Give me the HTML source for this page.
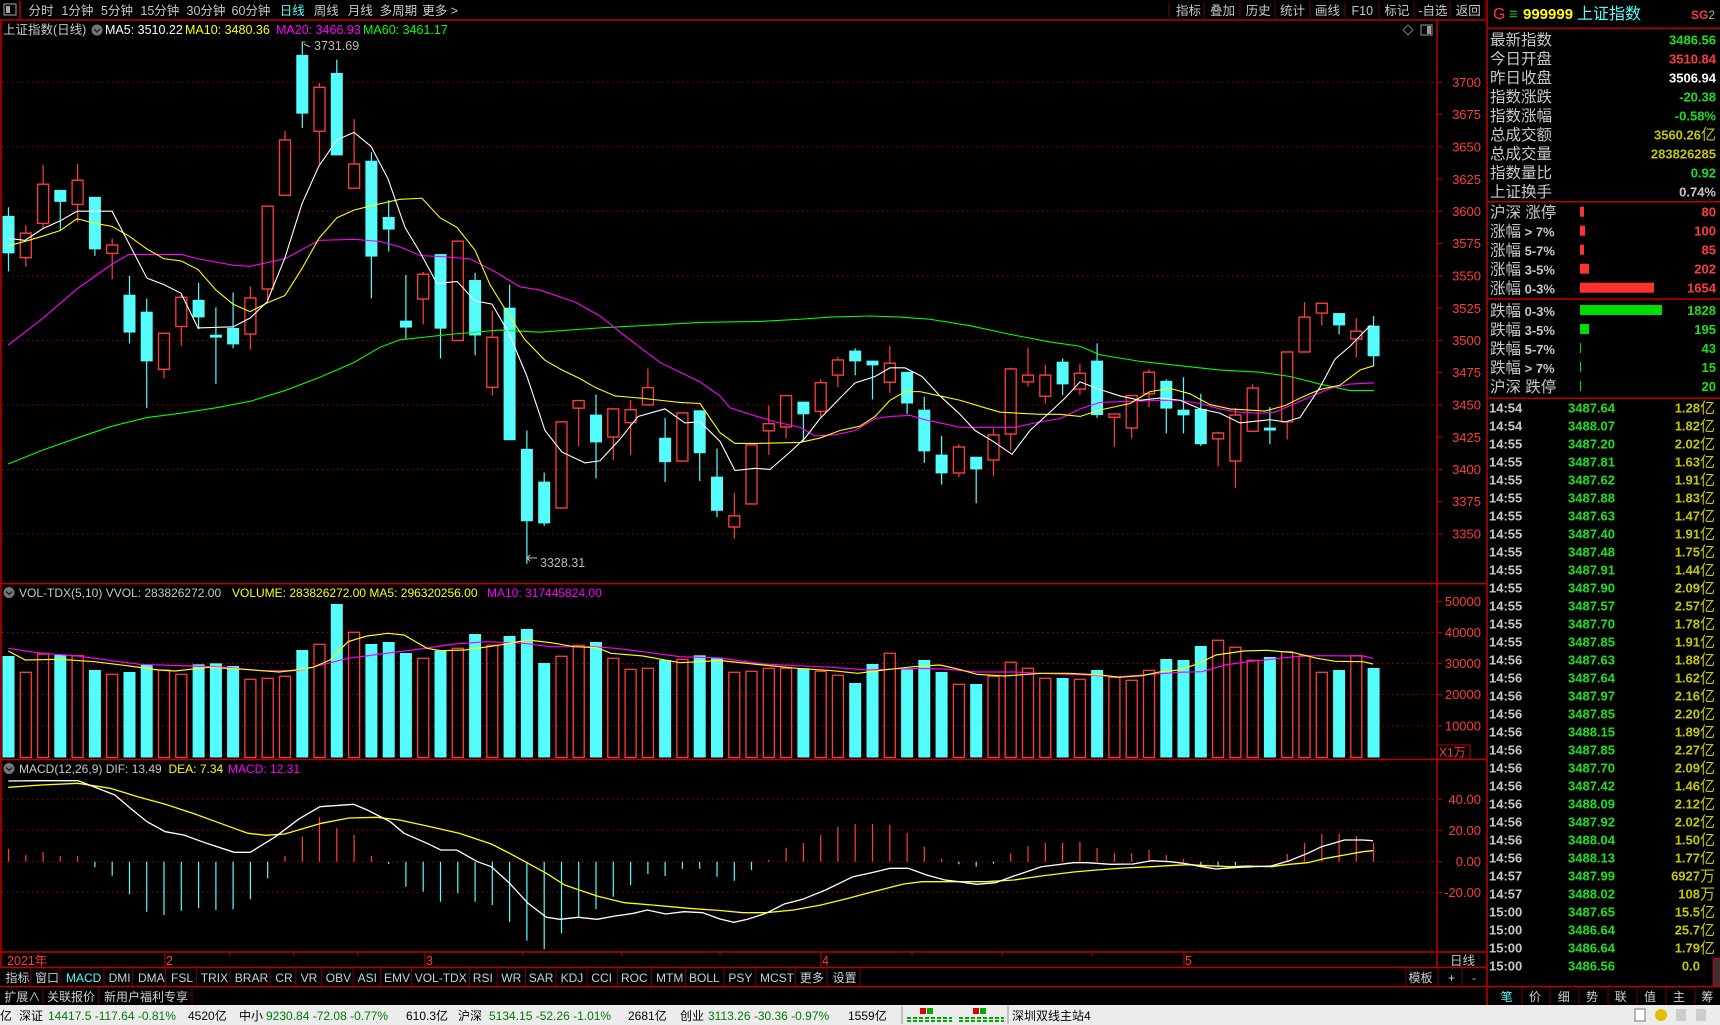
<!DOCTYPE html>
<html><head><meta charset="utf-8"><style>
html,body{margin:0;padding:0;background:#000;width:1720px;height:1025px;overflow:hidden}
svg{display:block}
text{font-family:"Liberation Sans","Noto Sans CJK SC",sans-serif}
.c{fill:#54fcfc}.cl{stroke:#54fcfc;stroke-width:1.2;fill:none}
.r{fill:none;stroke:#ff3c3c;stroke-width:1.3}.rl{stroke:#ff3c3c;stroke-width:1.2;fill:none}
.g{stroke:#a00000;stroke-dasharray:1.5 3.5;stroke-width:1}
.b{stroke:#c00000;stroke-width:1.5;fill:none}
.ax{fill:#ff3c3c;font-size:13px;text-anchor:end}
.tb{fill:#c8c8c8;font-size:12.5px}
.tab{fill:#d0d0d0;font-size:12px}
.lb{fill:#c8c8c8;font-size:15.5px}
.v{font-size:13px;font-weight:bold;text-anchor:end}
.t{font-size:13px;font-weight:bold}
.sep{stroke:#7a0000;stroke-width:1}
</style></head><body>
<svg width="1720" height="1025" viewBox="0 0 1720 1025" xmlns="http://www.w3.org/2000/svg">
<rect width="1720" height="1025" fill="#000"/>
<!-- toolbar -->
<rect x="4" y="4" width="12" height="11" fill="none" stroke="#aaa"/><rect x="6" y="6" width="4" height="7" fill="#aaa"/>
<line x1="20" y1="1" x2="20" y2="19" class="b"/>
<g class="tb">
<text x="28.5" y="15">分时</text><text x="61.4" y="15">1分钟</text><text x="101" y="15">5分钟</text><text x="140.4" y="15">15分钟</text><text x="186.5" y="15">30分钟</text><text x="231.5" y="15">60分钟</text><text x="279.7" y="15" fill="#54fcfc">日线</text><text x="313.7" y="15">周线</text><text x="347.7" y="15">月线</text><text x="379.6" y="15">多周期</text><text x="422.3" y="15">更多 &gt;</text>
<text x="1176" y="15">指标</text><text x="1210" y="15">叠加</text><text x="1245.6" y="15">历史</text><text x="1280" y="15">统计</text><text x="1315" y="15">画线</text><text x="1351.5" y="15">F10</text><text x="1384.4" y="15">标记</text><text x="1418.4" y="15">-自选</text><text x="1455.7" y="15">返回</text>
</g>
<g class="sep"><line x1="1169" y1="2" x2="1169" y2="18"/><line x1="1204" y1="2" x2="1204" y2="18"/><line x1="1240" y1="2" x2="1240" y2="18"/><line x1="1275" y1="2" x2="1275" y2="18"/><line x1="1310" y1="2" x2="1310" y2="18"/><line x1="1345" y1="2" x2="1345" y2="18"/><line x1="1379" y1="2" x2="1379" y2="18"/><line x1="1414" y1="2" x2="1414" y2="18"/><line x1="1450" y1="2" x2="1450" y2="18"/><line x1="1485" y1="2" x2="1485" y2="18"/></g>
<line x1="0" y1="20" x2="1487" y2="20" class="b"/>
<!-- frame lines -->
<line x1="1" y1="20" x2="1" y2="968" class="b"/>
<line x1="1437" y1="20" x2="1437" y2="968" class="b"/>
<line x1="1487" y1="0" x2="1487" y2="1005" class="b"/>
<line x1="0" y1="583.6" x2="1487" y2="583.6" class="b"/>
<line x1="0" y1="759.5" x2="1487" y2="759.5" class="b"/>
<line x1="0" y1="952" x2="1487" y2="952" class="b"/>
<line x1="0" y1="967.5" x2="1487" y2="967.5" class="b"/>
<line x1="0" y1="986.5" x2="1720" y2="986.5" class="b"/>
<!-- main header -->
<text x="3" y="34" fill="#c8c8c8" font-size="12.5">上证指数(日线)</text>
<circle cx="97" cy="30" r="5.5" fill="#777"/><path d="M94 29l3 3 3-3" stroke="#222" stroke-width="1.5" fill="none"/>
<text y="34" font-size="12.5"><tspan x="105" fill="#fff">MA5: 3510.22</tspan><tspan x="185" fill="#ffff00">MA10: 3480.36</tspan><tspan x="276" fill="#ff00ff">MA20: 3466.93</tspan><tspan x="363" fill="#00ff00">MA60: 3461.17</tspan></text>
<path d="M1408 25l5 5-5 5-5-5z" fill="none" stroke="#777"/>
<rect x="1421" y="25" width="11" height="10" fill="none" stroke="#999"/><rect x="1427" y="26" width="4" height="8" fill="#999"/>
<!-- main grid -->
<g class="g"><line x1="2" y1="82.3" x2="1437" y2="82.3"/><line x1="2" y1="146.8" x2="1437" y2="146.8"/><line x1="2" y1="211.3" x2="1437" y2="211.3"/><line x1="2" y1="275.9" x2="1437" y2="275.9"/><line x1="2" y1="340.4" x2="1437" y2="340.4"/><line x1="2" y1="404.9" x2="1437" y2="404.9"/><line x1="2" y1="469.4" x2="1437" y2="469.4"/><line x1="2" y1="533.9" x2="1437" y2="533.9"/></g>
<g class="ax">
<text x="1481" y="87">3700</text><text x="1481" y="119">3675</text><text x="1481" y="151.5">3650</text><text x="1481" y="184">3625</text><text x="1481" y="216">3600</text><text x="1481" y="248">3575</text><text x="1481" y="280.5">3550</text><text x="1481" y="313">3525</text><text x="1481" y="345">3500</text><text x="1481" y="377">3475</text><text x="1481" y="409.5">3450</text><text x="1481" y="442">3425</text><text x="1481" y="474">3400</text><text x="1481" y="506">3375</text><text x="1481" y="538.5">3350</text>
</g>
<g stroke="#c00000"><line x1="1437" y1="82.3" x2="1442" y2="82.3"/><line x1="1437" y1="114.6" x2="1442" y2="114.6"/><line x1="1437" y1="146.8" x2="1442" y2="146.8"/><line x1="1437" y1="179.1" x2="1442" y2="179.1"/><line x1="1437" y1="211.3" x2="1442" y2="211.3"/><line x1="1437" y1="243.6" x2="1442" y2="243.6"/><line x1="1437" y1="275.9" x2="1442" y2="275.9"/><line x1="1437" y1="308.1" x2="1442" y2="308.1"/><line x1="1437" y1="340.4" x2="1442" y2="340.4"/><line x1="1437" y1="372.6" x2="1442" y2="372.6"/><line x1="1437" y1="404.9" x2="1442" y2="404.9"/><line x1="1437" y1="437.1" x2="1442" y2="437.1"/><line x1="1437" y1="469.4" x2="1442" y2="469.4"/><line x1="1437" y1="501.7" x2="1442" y2="501.7"/><line x1="1437" y1="533.9" x2="1442" y2="533.9"/></g>
<!-- candles -->
<g transform="matrix(1,0,0,1.0803,0,-1.606)">
<path class="cl" d="M8.5 193.3V252.7M60.3 177.3V214.3M94.9 183.7V238.3M129.5 256.7V319.3M146.7 278V379.3M198.6 263.3V306M215.9 286V356.7M233.1 272.3V324M302.3 40V120M336.8 56.7V145.3M371.4 142.3V277.7M388.7 186.7V234.3M405.9 256V315M440.5 236.7V333.3M475.1 254V330.3M509.6 265V409M526.9 400V523.3M544.2 439V488.3M596 366.7V444.3M665.1 388.3V447.7M699.7 381.3V446.7M717 416.7V480M803.4 373.3V410M855.2 324V349M872.5 335.3V371.3M907.1 345.7V385M924.3 368.7V430M941.6 405V450M976.2 424.3V467.3M1062.6 333.3V367.3M1097.1 319.3V388.3M1166.3 352.7V402.7M1183.5 350.7V402.7M1200.8 366V414.3M1269.9 378.3V412.7M1339.1 291.3V311M1373.6 294V340"/>
<path class="rl" d="M25.8 210V217.3M25.8 240V248.3M43.1 154V172M43.1 208.3V212.7M77.6 153.3V168.3M77.6 190.7V207.3M112.2 222.3V228.3M112.2 236V260M164 343.3V351.7M181.3 274.3V276.7M181.3 303.7V321.7M250.4 266.7V277.3M250.4 310.7V325M267.7 269V280M285 122.7V131M319.5 78.3V82.3M319.5 123V153.3M354.1 111.7V153.3M423.2 253.3V255.3M423.2 278.3V301.7M492.3 289.3V313.7M492.3 360V367.3M578.7 379.3V414.3M613.3 406V427.3M630.6 371.7V380.7M630.6 392.7V422.7M647.9 342.7V360.3M734.3 457.7V479M734.3 489.3V500M768.8 376.7V393.7M768.8 400.3V422.7M786.1 396.7V407M820.7 352.7V355.7M820.7 382.3V388.3M837.9 331.7V334.7M837.9 348.7V360M889.8 321.7V337.7M889.8 355.3V365M958.9 412.7V415.3M958.9 439.3V443.3M993.5 398.3V404M993.5 427.3V442.3M1010.7 341.7V343M1010.7 403.3V418.3M1028 323.3V348.7M1028 355V359.3M1045.3 339V348.7M1045.3 368.3V375M1079.9 338.3V347M1079.9 361.7V367.3M1114.4 387.7V415M1131.7 397.7V407.3M1149 343.3V346M1149 366V378.3M1218.1 401V402.3M1218.1 407.7V433.3M1235.4 379.3V385.7M1235.4 428.3V453.3M1252.7 357.3V360.7M1287.2 392V408.3M1304.5 281V295M1321.8 291.3V302.7M1356.3 296V308M1356.3 315.3V332"/>
<g class="c">
<rect x="2.5" y="201.3" width="12" height="34.7"/><rect x="54.3" y="177.3" width="12" height="11"/><rect x="88.9" y="183.7" width="12" height="48.6"/><rect x="123.5" y="274.3" width="12" height="35"/><rect x="140.7" y="290" width="12" height="46"/><rect x="192.6" y="279" width="12" height="16.3"/><rect x="209.9" y="311.3" width="12" height="2.7"/><rect x="227.1" y="305" width="12" height="15.3"/><rect x="296.3" y="52.3" width="12" height="54.4"/><rect x="330.8" y="69" width="12" height="76.3"/><rect x="365.4" y="150.3" width="12" height="88.7"/><rect x="382.7" y="202.3" width="12" height="11.7"/><rect x="399.9" y="298.3" width="12" height="6.4"/><rect x="434.5" y="236.7" width="12" height="69"/><rect x="469.1" y="260.7" width="12" height="51.3"/><rect x="503.6" y="286.3" width="12" height="122.7"/><rect x="520.9" y="417" width="12" height="67"/><rect x="538.2" y="447.3" width="12" height="38.7"/><rect x="590" y="385.3" width="12" height="25.7"/><rect x="659.1" y="406.7" width="12" height="22.6"/><rect x="693.7" y="381.3" width="12" height="39.7"/><rect x="711" y="442.7" width="12" height="31.6"/><rect x="797.4" y="373.3" width="12" height="11.7"/><rect x="849.2" y="326" width="12" height="10"/><rect x="866.5" y="335.3" width="12" height="4.4"/><rect x="901.1" y="345.7" width="12" height="29.3"/><rect x="918.3" y="380.7" width="12" height="38.6"/><rect x="935.6" y="422.3" width="12" height="17.4"/><rect x="970.2" y="424.3" width="12" height="11.7"/><rect x="1056.6" y="336.3" width="12" height="21"/><rect x="1091.1" y="335.3" width="12" height="50.4"/><rect x="1160.3" y="354" width="12" height="25.7"/><rect x="1177.5" y="380.7" width="12" height="5.3"/><rect x="1194.8" y="380" width="12" height="32.7"/><rect x="1263.9" y="397.3" width="12" height="2.7"/><rect x="1333.1" y="291.3" width="12" height="11.4"/><rect x="1367.6" y="303" width="12" height="28.3"/>
</g>
<g class="r">
<rect x="20.3" y="217.3" width="11" height="22.7"/><rect x="37.6" y="172" width="11" height="36.3"/><rect x="72.1" y="168.3" width="11" height="22.4"/><rect x="106.7" y="228.3" width="11" height="7.7"/><rect x="158.5" y="310" width="11" height="33.3"/><rect x="175.8" y="276.7" width="11" height="27"/><rect x="244.9" y="277.3" width="11" height="33.4"/><rect x="262.2" y="192.3" width="11" height="76.7"/><rect x="279.5" y="131" width="11" height="51.3"/><rect x="314" y="82.3" width="11" height="40.7"/><rect x="348.6" y="153.3" width="11" height="22.4"/><rect x="417.7" y="255.3" width="11" height="23"/><rect x="452.3" y="224.7" width="11" height="92"/><rect x="486.8" y="313.7" width="11" height="46.3"/><rect x="556" y="392" width="11" height="79.7"/><rect x="573.2" y="372.3" width="11" height="7"/><rect x="607.8" y="380" width="11" height="26"/><rect x="625.1" y="380.7" width="11" height="12"/><rect x="642.4" y="360.3" width="11" height="16"/><rect x="676.9" y="383.7" width="11" height="44.6"/><rect x="728.8" y="479" width="11" height="10.3"/><rect x="746" y="413.3" width="11" height="54.7"/><rect x="763.3" y="393.7" width="11" height="6.6"/><rect x="780.6" y="367.7" width="11" height="29"/><rect x="815.2" y="355.7" width="11" height="26.6"/><rect x="832.4" y="334.7" width="11" height="14"/><rect x="884.3" y="337.7" width="11" height="17.6"/><rect x="953.4" y="415.3" width="11" height="24"/><rect x="988" y="404" width="11" height="23.3"/><rect x="1005.2" y="343" width="11" height="60.3"/><rect x="1022.5" y="348.7" width="11" height="6.3"/><rect x="1039.8" y="348.7" width="11" height="19.6"/><rect x="1074.4" y="347" width="11" height="14.7"/><rect x="1108.9" y="384.7" width="11" height="3"/><rect x="1126.2" y="367.7" width="11" height="30"/><rect x="1143.5" y="346" width="11" height="20"/><rect x="1212.6" y="402.3" width="11" height="5.4"/><rect x="1229.9" y="385.7" width="11" height="42.6"/><rect x="1247.2" y="360.7" width="11" height="40"/><rect x="1281.7" y="327.3" width="11" height="64.7"/><rect x="1299" y="295" width="11" height="32.3"/><rect x="1316.3" y="282.3" width="11" height="9"/><rect x="1350.8" y="308" width="11" height="7.3"/>
</g>
<g fill="none" stroke-width="1.1" vector-effect="non-scaling-stroke">
<polyline stroke="#00ff00" vector-effect="non-scaling-stroke" points="8,431 43,418 77,407 112,396 147,388 181,384 216,379 250,373 285,363 319,351 354,337 380,323 400,316 450,311 500,307 540,309 600,305 660,302 700,300 760,299 800,297 830,295 870,294 900,295 930,297 970,303 1010,311 1050,318 1080,322 1100,330 1140,336 1180,340 1220,344 1260,346 1290,350 1320,357 1350,363 1374,363"/>
<polyline stroke="#ff00ff" vector-effect="non-scaling-stroke" points="8,321 43,296 77,269 112,246 129,237 147,237 181,237 198,241 233,247 250,248 285,241 319,224 354,223 380,225 400,230 420,238 440,239 470,241 495,253 520,267 540,270 575,281 600,294 630,316 660,337 700,355 720,368 730,379 750,385 775,392 800,397 815,405 835,404 855,400 875,389 890,387 910,386 925,390 940,393 960,397 985,397 1015,397 1040,392 1060,389 1080,380 1100,374 1130,373 1160,372 1180,372 1200,375 1220,380 1240,383 1260,384 1275,383 1290,377 1310,369 1330,361 1350,357 1374,356"/>
<polyline stroke="#ffff00" vector-effect="non-scaling-stroke" points="8,229 25,225 43,220 60,215 77,204 94,208 112,211 129,220 147,232 164,241 181,243 198,251 216,270 233,283 250,290 267,282 285,275 302,250 319,222 337,203 354,196 371,192 400,186 422,185 440,203 457,212 475,233 490,265 510,295 525,316 545,335 562,344 580,352 595,360 615,368 640,370 660,372 680,374 700,375 720,402 735,412 755,412 800,411 820,407 840,400 860,396 875,387 890,372 905,364 920,364 940,368 960,372 985,379 1000,383 1040,385 1060,385 1080,387 1100,381 1130,375 1150,364 1170,361 1190,366 1210,376 1230,380 1265,382 1285,377 1300,370 1320,362 1340,358 1360,344 1374,340"/>
<polyline stroke="#ffffff" vector-effect="non-scaling-stroke" points="8,222 25,224 43,213 60,206 77,197 112,197 129,227 147,259 164,265 181,273 198,305 233,304 250,296 267,281 285,240 302,190 319,155 337,131 354,124 371,137 388,167 405,212 420,235 437,264 457,262 475,280 492,283 509,310 527,350 545,400 562,420 585,430 600,428 620,408 638,387 665,380 685,393 700,392 720,410 735,437 755,435 770,436 790,420 805,407 820,389 840,370 855,356 875,350 890,342 905,342 922,350 940,368 960,385 975,400 993,410 1012,422 1030,400 1050,383 1065,370 1080,355 1100,362 1120,368 1140,372 1160,370 1180,372 1200,380 1220,384 1240,393 1270,390 1285,392 1300,388 1320,360 1335,334 1350,322 1370,303 1374,304"/>
</g>
</g>
<!-- hi/lo labels -->
<path d="M302.3 42V47M302.3 42h3M304 44l6 3" stroke="#bbb" fill="none"/>
<text x="314" y="50" fill="#bbb" font-size="12.5">3731.69</text>
<path d="M527 558h10M527 558l3-3M527 558l3 3" stroke="#bbb" fill="none"/>
<text x="540" y="567" fill="#bbb" font-size="12.5">3328.31</text>
<!-- volume panel -->
<circle cx="9" cy="592.5" r="5.5" fill="#777"/><path d="M6 591.5l3 3 3-3" stroke="#222" stroke-width="1.5" fill="none"/>
<text y="597" font-size="12"><tspan x="19" fill="#c8c8c8">VOL-TDX(5,10) VVOL: 283826272.00</tspan><tspan x="232" fill="#ffff00">VOLUME: 283826272.00  MA5: 296320256.00</tspan><tspan x="487" fill="#ff00ff">MA10: 317445824.00</tspan></text>
<g class="g"><line x1="2" y1="632.5" x2="1437" y2="632.5"/><line x1="2" y1="663.5" x2="1437" y2="663.5"/><line x1="2" y1="694.5" x2="1437" y2="694.5"/><line x1="2" y1="726" x2="1437" y2="726"/></g>
<g class="ax"><text x="1481" y="606">50000</text><text x="1481" y="637">40000</text><text x="1481" y="668">30000</text><text x="1481" y="699">20000</text><text x="1481" y="730.5">10000</text></g>
<g stroke="#c00000"><line x1="1437" y1="601.6" x2="1442" y2="601.6"/><line x1="1437" y1="632.5" x2="1442" y2="632.5"/><line x1="1437" y1="663.5" x2="1442" y2="663.5"/><line x1="1437" y1="694.5" x2="1442" y2="694.5"/><line x1="1437" y1="726" x2="1442" y2="726"/></g>
<rect x="1437" y="745" width="33" height="14" fill="none" stroke="#c00000"/><text x="1439" y="756.5" fill="#ff3c3c" font-size="12">X1万</text>
<g class="c">
<rect x="2.5" y="656" width="12" height="101.5"/><rect x="54.3" y="655" width="12" height="102.5"/><rect x="88.9" y="670" width="12" height="87.5"/><rect x="123.5" y="672" width="12" height="85.5"/><rect x="140.7" y="665" width="12" height="92.5"/><rect x="192.6" y="664.3" width="12" height="93.2"/><rect x="209.9" y="663.3" width="12" height="94.2"/><rect x="227.1" y="666" width="12" height="91.5"/><rect x="296.3" y="650" width="12" height="107.5"/><rect x="330.8" y="604" width="12" height="153.5"/><rect x="365.4" y="644" width="12" height="113.5"/><rect x="382.7" y="642" width="12" height="115.5"/><rect x="399.9" y="653" width="12" height="104.5"/><rect x="434.5" y="650.7" width="12" height="106.8"/><rect x="469.1" y="634" width="12" height="123.5"/><rect x="503.6" y="636" width="12" height="121.5"/><rect x="520.9" y="629" width="12" height="128.5"/><rect x="538.2" y="663" width="12" height="94.5"/><rect x="590" y="642" width="12" height="115.5"/><rect x="659.1" y="660" width="12" height="97.5"/><rect x="693.7" y="655.3" width="12" height="102.2"/><rect x="711" y="657.7" width="12" height="99.8"/><rect x="797.4" y="668.3" width="12" height="89.2"/><rect x="849.2" y="683" width="12" height="74.5"/><rect x="866.5" y="664" width="12" height="93.5"/><rect x="901.1" y="669.3" width="12" height="88.2"/><rect x="918.3" y="660" width="12" height="97.5"/><rect x="935.6" y="672" width="12" height="85.5"/><rect x="970.2" y="684" width="12" height="73.5"/><rect x="1056.6" y="678" width="12" height="79.5"/><rect x="1091.1" y="670" width="12" height="87.5"/><rect x="1160.3" y="659" width="12" height="98.5"/><rect x="1177.5" y="660" width="12" height="97.5"/><rect x="1194.8" y="646" width="12" height="111.5"/><rect x="1263.9" y="657" width="12" height="100.5"/><rect x="1333.1" y="670" width="12" height="87.5"/><rect x="1367.6" y="668" width="12" height="89.5"/>
</g>
<g class="r">
<rect x="20.3" y="672.3" width="11" height="85.2"/><rect x="37.6" y="654" width="11" height="103.5"/><rect x="72.1" y="655.7" width="11" height="101.8"/><rect x="106.7" y="674.3" width="11" height="83.2"/><rect x="158.5" y="670" width="11" height="87.5"/><rect x="175.8" y="674.3" width="11" height="83.2"/><rect x="244.9" y="679.3" width="11" height="78.2"/><rect x="262.2" y="678.3" width="11" height="79.2"/><rect x="279.5" y="676.3" width="11" height="81.2"/><rect x="314" y="644.3" width="11" height="113.2"/><rect x="348.6" y="632.3" width="11" height="125.2"/><rect x="417.7" y="658.3" width="11" height="99.2"/><rect x="452.3" y="648.3" width="11" height="109.2"/><rect x="486.8" y="645.3" width="11" height="112.2"/><rect x="556" y="656.3" width="11" height="101.2"/><rect x="573.2" y="645.3" width="11" height="112.2"/><rect x="607.8" y="658.3" width="11" height="99.2"/><rect x="625.1" y="669.3" width="11" height="88.2"/><rect x="642.4" y="668.3" width="11" height="89.2"/><rect x="676.9" y="659.3" width="11" height="98.2"/><rect x="728.8" y="672.3" width="11" height="85.2"/><rect x="746" y="671.3" width="11" height="86.2"/><rect x="763.3" y="668.3" width="11" height="89.2"/><rect x="780.6" y="668.3" width="11" height="89.2"/><rect x="815.2" y="671.3" width="11" height="86.2"/><rect x="832.4" y="675.3" width="11" height="82.2"/><rect x="884.3" y="653.3" width="11" height="104.2"/><rect x="953.4" y="684.3" width="11" height="73.2"/><rect x="988" y="676.3" width="11" height="81.2"/><rect x="1005.2" y="662.3" width="11" height="95.2"/><rect x="1022.5" y="668.3" width="11" height="89.2"/><rect x="1039.8" y="678.3" width="11" height="79.2"/><rect x="1074.4" y="679.3" width="11" height="78.2"/><rect x="1108.9" y="677.3" width="11" height="80.2"/><rect x="1126.2" y="680.3" width="11" height="77.2"/><rect x="1143.5" y="670.3" width="11" height="87.2"/><rect x="1212.6" y="640.3" width="11" height="117.2"/><rect x="1229.9" y="647.3" width="11" height="110.2"/><rect x="1247.2" y="660.3" width="11" height="97.2"/><rect x="1281.7" y="651.7" width="11" height="105.8"/><rect x="1299" y="655.7" width="11" height="101.8"/><rect x="1316.3" y="672.3" width="11" height="85.2"/><rect x="1350.8" y="655.7" width="11" height="101.8"/>
</g>
<polyline fill="none" stroke="#ff00ff" stroke-width="1.2" points="8.3,648.3 36.7,652.7 77.6,656 112,660.7 140,664.3 192.8,666 226,667.3 261.7,670.7 296,670.7 312,667.3 348,658.3 381,654 413,650 454.5,644 486.7,641.7 523.4,643.3 551,646.7 592.3,646.7 615.3,648.3 643,651.7 680,656.7 720,658 763,664 797,665.7 832.5,667.3 867,670 913,668.3 945,669 977,672 1013.8,672 1041,673.3 1087,675 1119,676.7 1151.6,674.3 1179,672.3 1202,671.7 1225,665 1248,661.7 1271,659.3 1294,656.7 1317,655.7 1363,656 1373,658.3"/>
<polyline fill="none" stroke="#ffff00" stroke-width="1.2" points="8.3,651 25.3,660 60.1,659.3 94.6,661.7 129.5,666 158,670 175,671 209,667.3 244,669.3 279,672 296,670 313,667.3 330,660 348,641.7 367,636 388,633.3 404,635 427,648.3 441,650.7 465,650 498,645.3 528,640 551,642.7 574,646.7 597,647.7 611,653.3 643,656 680,662.7 720,660.5 763,665 797,668.3 832.5,670.7 857.7,673.3 884,670 913,666.7 940,665 959,669.3 977,674.3 1004.7,676 1041,673.3 1069,673.3 1101,675 1119,677.3 1142,675.7 1161,671.7 1179,670 1197.5,664 1216,655 1243.5,651 1266.4,650.3 1294,652.7 1317,658.3 1335,661.3 1363,661.7 1373,664"/>
<!-- MACD panel -->
<circle cx="9" cy="768.5" r="5.5" fill="#777"/><path d="M6 767.5l3 3 3-3" stroke="#222" stroke-width="1.5" fill="none"/>
<text y="773" font-size="12"><tspan x="19" fill="#c8c8c8">MACD(12,26,9) DIF: 13.49</tspan><tspan x="168.5" fill="#ffff00">DEA: 7.34</tspan><tspan x="228" fill="#ff00ff">MACD: 12.31</tspan></text>
<g class="g"><line x1="2" y1="799.3" x2="1437" y2="799.3"/><line x1="2" y1="830.3" x2="1437" y2="830.3"/><line x1="2" y1="861.7" x2="1437" y2="861.7"/><line x1="2" y1="892.3" x2="1437" y2="892.3"/></g>
<g class="ax"><text x="1481" y="804">40.00</text><text x="1481" y="835">20.00</text><text x="1481" y="866">0.00</text><text x="1481" y="897">-20.00</text></g>
<g stroke="#c00000"><line x1="1437" y1="799.3" x2="1442" y2="799.3"/><line x1="1437" y1="830.3" x2="1442" y2="830.3"/><line x1="1437" y1="861.7" x2="1442" y2="861.7"/><line x1="1437" y1="892.3" x2="1442" y2="892.3"/></g>
<path stroke="#ff3c3c" stroke-width="1.2" d="M8.5 861.7V848.7M25.8 861.7V855M43.1 861.7V852M60.3 861.7V856M77.6 861.7V856M285 861.7V856M302.3 861.7V836.7M319.5 861.7V817.3M336.8 861.7V828.3M354.1 861.7V835M371.4 861.7V856M768.8 861.7V860M786.1 861.7V847.7M803.4 861.7V843M820.7 861.7V835M837.9 861.7V826.7M855.2 861.7V824M872.5 861.7V824M889.8 861.7V825M907.1 861.7V833M924.3 861.7V846.7M941.6 861.7V859M1010.7 861.7V853.3M1028 861.7V846M1045.3 861.7V843M1062.6 861.7V843M1079.9 861.7V842M1097.1 861.7V848M1114.4 861.7V853.3M1131.7 861.7V853.3M1149 861.7V850M1166.3 861.7V855M1183.5 861.7V859M1287.2 861.7V854M1304.5 861.7V843M1321.8 861.7V834M1339.1 861.7V834M1356.3 861.7V836M1373.6 861.7V843"/>
<path stroke="#54fcfc" stroke-width="1.2" d="M94.9 861.7V867.3M112.2 861.7V875.7M129.5 861.7V894.3M146.7 861.7V911.7M164 861.7V915M181.3 861.7V910.7M198.6 861.7V908.3M215.9 861.7V910M233.1 861.7V909.3M250.4 861.7V899.3M267.7 861.7V878.3M388.7 861.7V864M405.9 861.7V886.7M423.2 861.7V891.7M440.5 861.7V901.7M457.8 861.7V893.3M475.1 861.7V901.7M492.3 861.7V905M509.6 861.7V921.7M526.9 861.7V940.7M544.2 861.7V949.3M561.5 861.7V933.3M578.7 861.7V916.7M596 861.7V909.3M613.3 861.7V896.7M630.6 861.7V885M647.9 861.7V874M665.1 861.7V876M682.4 861.7V868.7M699.7 861.7V868.7M717 861.7V876.7M734.3 861.7V880.7M751.5 861.7V870M958.9 861.7V864.3M976.2 861.7V866.7M993.5 861.7V863.7M1200.8 861.7V865.3M1218.1 861.7V866.7M1235.4 861.7V865.3"/>
<polyline fill="none" stroke="#ffff00" stroke-width="1.3" points="8.3,787.3 41.3,785 78,783.3 110.2,788.3 137.7,796.7 165.3,804.3 192.8,813.3 220.4,823.3 248,833.3 266.3,835.3 284.7,834 321.4,823.3 349,818 376.5,817.3 399.5,820 427,826 459.1,833.3 491.3,844 509.6,853.3 528,863.3 546.4,873.3 564.7,885 596.9,896 624.4,902.7 652,905 688.7,908.3 720,910.5 743,912.7 766,912.7 793.5,910 821,905 848.6,898.3 867,893.3 903.7,884 922,881.7 986.3,881.7 1013.8,880 1041.4,876 1073.5,872 1096.5,870 1124,868 1151.6,866.7 1174.5,865.3 1188.3,864.7 1206.7,865.7 1229.6,866.7 1248,866 1271,866.7 1289.3,864.3 1307.7,862.7 1326,858.3 1344.4,855 1362.8,851.7 1373,850.7"/>
<polyline fill="none" stroke="#ffffff" stroke-width="1.3" points="8.3,781 41.3,780.7 78,780.7 91.8,786 114.8,795 128.6,806.7 147,821.7 165.3,831.7 183.7,835 206.6,843.3 234.2,852.3 250.2,852.3 275.5,836.7 298.4,819.3 320,806.7 353.5,804.3 367.3,810 390.3,821.7 404,833.3 427,843.3 440.8,850 456.8,850 477.5,861.7 491.3,866.7 509.6,883.3 528,903.3 546.4,917.3 560,919.3 578.5,917.3 597,919.3 615.2,916 633.6,913.3 647.4,910 665.7,914 684,911.7 702.5,912.7 720,919 733.8,922.3 747.5,919.3 766,913.3 784.3,904 802.6,899.3 825.6,890 853,876.7 871.5,872.7 889.9,868.3 908.2,868.3 926.6,875 945,880 958.7,881.7 977,884.3 995.5,882.7 1013.8,876 1041.4,866.7 1073.5,862.7 1087.3,862.7 1110.3,864.3 1133,864 1151.6,860.7 1170,861.7 1183.7,863.3 1202,866.7 1215.9,869 1238.8,867.3 1271,866 1289.3,860.7 1307.7,853.3 1321.5,846.7 1344.4,840 1362.8,840 1373,840.7"/>
<!-- date axis -->
<g stroke="#c00000"><line x1="165" y1="952" x2="165" y2="967"/><line x1="425" y1="952" x2="425" y2="967"/><line x1="821" y1="952" x2="821" y2="967"/><line x1="1184" y1="952" x2="1184" y2="967"/><line x1="229.6" y1="952" x2="229.6" y2="956"/><line x1="294" y1="952" x2="294" y2="956"/><line x1="358" y1="952" x2="358" y2="956"/><line x1="523" y1="952" x2="523" y2="956"/><line x1="622" y1="952" x2="622" y2="956"/><line x1="720" y1="952" x2="720" y2="956"/><line x1="912" y1="952" x2="912" y2="956"/><line x1="1002" y1="952" x2="1002" y2="956"/><line x1="1092" y1="952" x2="1092" y2="956"/></g>
<g fill="#ff3c3c" font-size="12.5"><text x="7" y="965">2021年</text><text x="166" y="965">2</text><text x="426" y="965">3</text><text x="822" y="965">4</text><text x="1185" y="965">5</text></g>
<text x="1450" y="965" fill="#c8c8c8" font-size="12.5">日线</text>
<!-- indicator tabs -->
<g class="tab">
<text x="5.5" y="982">指标</text><text x="35" y="982">窗口</text><text x="66" y="982" fill="#54fcfc">MACD</text><text x="108.6" y="982">DMI</text><text x="138" y="982">DMA</text><text x="171" y="982">FSL</text><text x="200.8" y="982">TRIX</text><text x="234.8" y="982">BRAR</text><text x="275.3" y="982">CR</text><text x="300.6" y="982">VR</text><text x="325.8" y="982">OBV</text><text x="357.6" y="982">ASI</text><text x="384" y="982">EMV</text><text x="414.7" y="982">VOL-TDX</text><text x="472.8" y="982">RSI</text><text x="501.3" y="982">WR</text><text x="528.8" y="982">SAR</text><text x="560.6" y="982">KDJ</text><text x="591.3" y="982">CCI</text><text x="621" y="982">ROC</text><text x="656" y="982">MTM</text><text x="689" y="982">BOLL</text><text x="728.4" y="982">PSY</text><text x="760" y="982">MCST</text><text x="799.7" y="982">更多</text><text x="832.6" y="982">设置</text>
<text x="1408.5" y="982">模板</text><text x="1448" y="982">+</text><text x="1472" y="982">-</text>
</g>
<g class="sep"><line x1="30.7" y1="968" x2="30.7" y2="986"/><line x1="60" y1="968" x2="60" y2="986"/><line x1="104" y1="968" x2="104" y2="986"/><line x1="132.7" y1="968" x2="132.7" y2="986"/><line x1="165.6" y1="968" x2="165.6" y2="986"/><line x1="196.4" y1="968" x2="196.4" y2="986"/><line x1="230" y1="968" x2="230" y2="986"/><line x1="270" y1="968" x2="270" y2="986"/><line x1="296" y1="968" x2="296" y2="986"/><line x1="321.4" y1="968" x2="321.4" y2="986"/><line x1="353" y1="968" x2="353" y2="986"/><line x1="380.7" y1="968" x2="380.7" y2="986"/><line x1="411.4" y1="968" x2="411.4" y2="986"/><line x1="469.5" y1="968" x2="469.5" y2="986"/><line x1="497" y1="968" x2="497" y2="986"/><line x1="525.5" y1="968" x2="525.5" y2="986"/><line x1="556" y1="968" x2="556" y2="986"/><line x1="587" y1="968" x2="587" y2="986"/><line x1="617.6" y1="968" x2="617.6" y2="986"/><line x1="651.6" y1="968" x2="651.6" y2="986"/><line x1="685.6" y1="968" x2="685.6" y2="986"/><line x1="724" y1="968" x2="724" y2="986"/><line x1="755.8" y1="968" x2="755.8" y2="986"/><line x1="795.3" y1="968" x2="795.3" y2="986"/><line x1="827" y1="968" x2="827" y2="986"/><line x1="860" y1="968" x2="860" y2="986"/><line x1="1406" y1="968" x2="1406" y2="986"/><line x1="1438" y1="968" x2="1438" y2="986"/><line x1="1462" y1="968" x2="1462" y2="986"/></g>
<!-- ext row -->
<g class="tab"><text x="4.4" y="1001">扩展∧</text><text x="47" y="1001">关联报价</text><text x="104" y="1001">新用户福利专享</text>
<text x="1500.6" y="1001" fill="#54fcfc">笔</text><text x="1529" y="1001">价</text><text x="1557.7" y="1001">细</text><text x="1586" y="1001">势</text><text x="1614.7" y="1001">联</text><text x="1644" y="1001">值</text><text x="1673" y="1001">主</text><text x="1701.4" y="1001">筹</text></g>
<g class="sep"><line x1="42.8" y1="987" x2="42.8" y2="1005"/><line x1="98.7" y1="987" x2="98.7" y2="1005"/><line x1="192" y1="987" x2="192" y2="1005"/><line x1="1522" y1="987" x2="1522" y2="1005"/><line x1="1550" y1="987" x2="1550" y2="1005"/><line x1="1579" y1="987" x2="1579" y2="1005"/><line x1="1608" y1="987" x2="1608" y2="1005"/><line x1="1637" y1="987" x2="1637" y2="1005"/><line x1="1666" y1="987" x2="1666" y2="1005"/><line x1="1695" y1="987" x2="1695" y2="1005"/></g>
<!-- status bar -->
<rect x="0" y="1005" width="1720" height="20" fill="#ececec"/>
<g font-size="12" fill="#000">
<text x="0" y="1020">亿</text><text x="19" y="1020">深证</text><text x="48" y="1020" fill="#007a00">14417.5 -117.64 -0.81%</text><text x="188" y="1020">4520亿</text>
<text x="239" y="1020">中小</text><text x="266" y="1020" fill="#007a00">9230.84  -72.08  -0.77%</text><text x="406" y="1020">610.3亿</text>
<text x="458" y="1020">沪深</text><text x="489" y="1020" fill="#007a00">5134.15  -52.26  -1.01%</text><text x="628" y="1020">2681亿</text>
<text x="680" y="1020">创业</text><text x="708" y="1020" fill="#007a00">3113.26  -30.36  -0.97%</text><text x="848" y="1020">1559亿</text>
<text x="1012" y="1020">深圳双线主站4</text>
</g>
<line x1="902" y1="1006" x2="902" y2="1024" stroke="#999"/><line x1="1008" y1="1006" x2="1008" y2="1024" stroke="#999"/>
<rect x="920" y="1008" width="6" height="6" fill="#d00"/><rect x="927" y="1008" width="6" height="6" fill="#0a0"/><rect x="973" y="1008" width="6" height="6" fill="#d00"/><rect x="980" y="1008" width="6" height="6" fill="#0a0"/>
<path d="M907 1018h45M959 1018h45M907 1021h45M959 1021h45" stroke="#0a0" stroke-width="2" stroke-dasharray="4 2"/>
<rect x="1635" y="1009" width="10" height="12" fill="#fff" stroke="#777"/><circle cx="1661" cy="1015" r="6" fill="#e0c000"/><rect x="1676" y="1009" width="10" height="12" fill="#ccc"/><rect x="1696" y="1009" width="10" height="12" fill="#ccc"/>
<!-- right panel -->
<text x="1493" y="19" font-size="16" fill="#ff3c3c">G</text><text x="1509" y="19" font-size="15" fill="#00c000">≡</text>
<text x="1523" y="19" font-size="15" font-weight="bold" fill="#ffff00">999999</text><text x="1577" y="19" font-size="16" fill="#54fcfc">上证指数</text>
<text x="1691" y="19" font-size="12" font-weight="bold" fill="#ff3c3c">SG<tspan fill="#aaa" font-weight="normal">2</tspan></text>
<line x1="1487" y1="28.3" x2="1720" y2="28.3" class="b"/>
<g class="lb">
<text x="1490" y="45">最新指数</text><text x="1490" y="64">今日开盘</text><text x="1490" y="83">昨日收盘</text><text x="1490" y="102">指数涨跌</text><text x="1490" y="121">指数涨幅</text><text x="1490" y="140">总成交额</text><text x="1490" y="159">总成交量</text><text x="1490" y="178">指数量比</text><text x="1490" y="197">上证换手</text>
</g>
<g class="v">
<text x="1716" y="44.5" fill="#1ee01e">3486.56</text><text x="1716" y="63.5" fill="#ff3c3c">3510.84</text><text x="1716" y="82.5" fill="#fff">3506.94</text><text x="1716" y="101.5" fill="#1ee01e">-20.38</text><text x="1716" y="120.5" fill="#1ee01e">-0.58%</text><text x="1716" y="139.5" fill="#c8c800">3560.26<tspan font-weight="normal" font-size="15">亿</tspan></text><text x="1716" y="158.5" fill="#c8c800">283826285</text><text x="1716" y="177.5" fill="#1ee01e">0.92</text><text x="1716" y="196.5" fill="#c8c8c8">0.74%</text>
</g>
<line x1="1487" y1="201.7" x2="1720" y2="201.7" class="b"/>
<g class="lb">
<text x="1490" y="217.5">沪深 涨停</text><text x="1490" y="236.5">涨幅<tspan font-size="13" font-weight="bold"> &gt; 7%</tspan></text><text x="1490" y="255.5">涨幅<tspan font-size="13" font-weight="bold"> 5-7%</tspan></text><text x="1490" y="274.5">涨幅<tspan font-size="13" font-weight="bold"> 3-5%</tspan></text><text x="1490" y="293.5">涨幅<tspan font-size="13" font-weight="bold"> 0-3%</tspan></text>
<text x="1490" y="316">跌幅<tspan font-size="13" font-weight="bold"> 0-3%</tspan></text><text x="1490" y="335">跌幅<tspan font-size="13" font-weight="bold"> 3-5%</tspan></text><text x="1490" y="354">跌幅<tspan font-size="13" font-weight="bold"> 5-7%</tspan></text><text x="1490" y="373">跌幅<tspan font-size="13" font-weight="bold"> &gt; 7%</tspan></text><text x="1490" y="392">沪深 跌停</text>
</g>
<g fill="#ff3232"><rect x="1580" y="206.7" width="4" height="10"/><rect x="1580" y="225.7" width="5" height="10"/><rect x="1580" y="244.7" width="4" height="10"/><rect x="1580" y="263.7" width="9" height="10"/><rect x="1580" y="282.7" width="74" height="10"/></g>
<g fill="#00dd00"><rect x="1580" y="305" width="82" height="10"/><rect x="1580" y="324" width="9" height="10"/><rect x="1580" y="343" width="1" height="10"/><rect x="1580" y="362" width="1" height="10"/><rect x="1580" y="381" width="1" height="10"/></g>
<g class="v">
<text x="1716" y="216.5" fill="#ff3c3c">80</text><text x="1716" y="235.5" fill="#ff3c3c">100</text><text x="1716" y="254.5" fill="#ff3c3c">85</text><text x="1716" y="273.5" fill="#ff3c3c">202</text><text x="1716" y="292.5" fill="#ff3c3c">1654</text>
<text x="1716" y="315" fill="#1ee01e">1828</text><text x="1716" y="334" fill="#1ee01e">195</text><text x="1716" y="353" fill="#1ee01e">43</text><text x="1716" y="372" fill="#1ee01e">15</text><text x="1716" y="391" fill="#1ee01e">20</text>
</g>
<line x1="1487" y1="299" x2="1720" y2="299" class="b"/>
<line x1="1487" y1="398.3" x2="1720" y2="398.3" class="b"/>
<!-- ticks -->
<g class="t" fill="#c8c8c8">
<text x="1489" y="412.3">14:54</text><text x="1489" y="430.3">14:54</text><text x="1489" y="448.3">14:55</text><text x="1489" y="466.3">14:55</text><text x="1489" y="484.3">14:55</text><text x="1489" y="502.3">14:55</text><text x="1489" y="520.3">14:55</text><text x="1489" y="538.3">14:55</text><text x="1489" y="556.3">14:55</text><text x="1489" y="574.3">14:55</text><text x="1489" y="592.3">14:55</text><text x="1489" y="610.3">14:55</text><text x="1489" y="628.3">14:55</text><text x="1489" y="646.3">14:55</text><text x="1489" y="664.3">14:56</text><text x="1489" y="682.3">14:56</text><text x="1489" y="700.3">14:56</text><text x="1489" y="718.3">14:56</text><text x="1489" y="736.3">14:56</text><text x="1489" y="754.3">14:56</text><text x="1489" y="772.3">14:56</text><text x="1489" y="790.3">14:56</text><text x="1489" y="808.3">14:56</text><text x="1489" y="826.3">14:56</text><text x="1489" y="844.3">14:56</text><text x="1489" y="862.3">14:56</text><text x="1489" y="880.3">14:57</text><text x="1489" y="898.3">14:57</text><text x="1489" y="916.3">15:00</text><text x="1489" y="934.3">15:00</text><text x="1489" y="952.3">15:00</text><text x="1489" y="970.3">15:00</text>
</g>
<g class="t" fill="#1ee01e">
<text x="1568" y="412.3">3487.64</text><text x="1568" y="430.3">3488.07</text><text x="1568" y="448.3">3487.20</text><text x="1568" y="466.3">3487.81</text><text x="1568" y="484.3">3487.62</text><text x="1568" y="502.3">3487.88</text><text x="1568" y="520.3">3487.63</text><text x="1568" y="538.3">3487.40</text><text x="1568" y="556.3">3487.48</text><text x="1568" y="574.3">3487.91</text><text x="1568" y="592.3">3487.90</text><text x="1568" y="610.3">3487.57</text><text x="1568" y="628.3">3487.70</text><text x="1568" y="646.3">3487.85</text><text x="1568" y="664.3">3487.63</text><text x="1568" y="682.3">3487.64</text><text x="1568" y="700.3">3487.97</text><text x="1568" y="718.3">3487.85</text><text x="1568" y="736.3">3488.15</text><text x="1568" y="754.3">3487.85</text><text x="1568" y="772.3">3487.70</text><text x="1568" y="790.3">3487.42</text><text x="1568" y="808.3">3488.09</text><text x="1568" y="826.3">3487.92</text><text x="1568" y="844.3">3488.04</text><text x="1568" y="862.3">3488.13</text><text x="1568" y="880.3">3487.99</text><text x="1568" y="898.3">3488.02</text><text x="1568" y="916.3">3487.65</text><text x="1568" y="934.3">3486.64</text><text x="1568" y="952.3">3486.64</text><text x="1568" y="970.3">3486.56</text>
</g>
<g class="v" fill="#c8c800">
<text x="1700" y="412.3">1.28</text><text x="1700" y="430.3">1.82</text><text x="1700" y="448.3">2.02</text><text x="1700" y="466.3">1.63</text><text x="1700" y="484.3">1.91</text><text x="1700" y="502.3">1.83</text><text x="1700" y="520.3">1.47</text><text x="1700" y="538.3">1.91</text><text x="1700" y="556.3">1.75</text><text x="1700" y="574.3">1.44</text><text x="1700" y="592.3">2.09</text><text x="1700" y="610.3">2.57</text><text x="1700" y="628.3">1.78</text><text x="1700" y="646.3">1.91</text><text x="1700" y="664.3">1.88</text><text x="1700" y="682.3">1.62</text><text x="1700" y="700.3">2.16</text><text x="1700" y="718.3">2.20</text><text x="1700" y="736.3">1.89</text><text x="1700" y="754.3">2.27</text><text x="1700" y="772.3">2.09</text><text x="1700" y="790.3">1.46</text><text x="1700" y="808.3">2.12</text><text x="1700" y="826.3">2.02</text><text x="1700" y="844.3">1.50</text><text x="1700" y="862.3">1.77</text><text x="1700" y="880.3">6927</text><text x="1700" y="898.3">108</text><text x="1700" y="916.3">15.5</text><text x="1700" y="934.3">25.7</text><text x="1700" y="952.3">1.79</text><text x="1700" y="970.3">0.0</text>
</g>
<g fill="#c8c800" font-size="15">
<text x="1700" y="413">亿</text><text x="1700" y="431">亿</text><text x="1700" y="449">亿</text><text x="1700" y="467">亿</text><text x="1700" y="485">亿</text><text x="1700" y="503">亿</text><text x="1700" y="521">亿</text><text x="1700" y="539">亿</text><text x="1700" y="557">亿</text><text x="1700" y="575">亿</text><text x="1700" y="593">亿</text><text x="1700" y="611">亿</text><text x="1700" y="629">亿</text><text x="1700" y="647">亿</text><text x="1700" y="665">亿</text><text x="1700" y="683">亿</text><text x="1700" y="701">亿</text><text x="1700" y="719">亿</text><text x="1700" y="737">亿</text><text x="1700" y="755">亿</text><text x="1700" y="773">亿</text><text x="1700" y="791">亿</text><text x="1700" y="809">亿</text><text x="1700" y="827">亿</text><text x="1700" y="845">亿</text><text x="1700" y="863">亿</text><text x="1700" y="881">万</text><text x="1700" y="899">万</text><text x="1700" y="917">亿</text><text x="1700" y="935">亿</text><text x="1700" y="953">亿</text>
</g>
<rect x="1713" y="958" width="7" height="28" fill="#333" stroke="#c00000"/>
</svg>
</body></html>
